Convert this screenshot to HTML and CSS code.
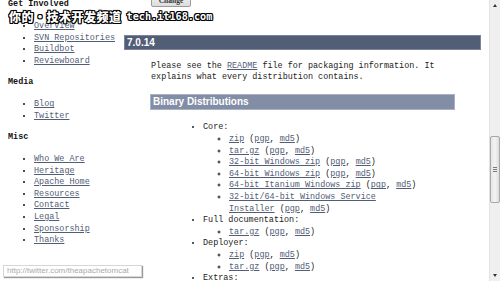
FILE: index.html
```html
<!DOCTYPE html>
<html>
<head>
<meta charset="utf-8">
<link rel="stylesheet" href="styles.css">
</head>
<body>
<div class="page">
  <nav class="side">
    <h2>Get Involved</h2>
    <ul>
      <li><a href="#">Overview</a></li>
      <li><a href="#">SVN Repositories</a></li>
      <li><a href="#">Buildbot</a></li>
      <li><a href="#">Reviewboard</a></li>
    </ul>
    <h2>Media</h2>
    <ul>
      <li><a href="#">Blog</a></li>
      <li><a href="#">Twitter</a></li>
    </ul>
    <h2>Misc</h2>
    <ul>
      <li><a href="#">Who We Are</a></li>
      <li><a href="#">Heritage</a></li>
      <li><a href="#">Apache Home</a></li>
      <li><a href="#">Resources</a></li>
      <li><a href="#">Contact</a></li>
      <li><a href="#">Legal</a></li>
      <li><a href="#">Sponsorship</a></li>
      <li><a href="#">Thanks</a></li>
    </ul>
  </nav>
  <main class="main">
    <div class="top"><button class="btn">Change</button></div>
    <h3 class="h3">7.0.14</h3>
    <div class="body">
      <p class="intro">Please see the <a href="#">README</a> file for packaging information. It explains what every distribution contains.</p>
      <h4 class="h4">Binary Distributions</h4>
      <ul class="dl">
        <li>Core:
          <ul>
            <li><a href="#">zip</a> (<a href="#">pgp</a>, <a href="#">md5</a>)</li>
            <li><a href="#">tar.gz</a> (<a href="#">pgp</a>, <a href="#">md5</a>)</li>
            <li><a href="#">32-bit Windows zip</a> (<a href="#">pgp</a>, <a href="#">md5</a>)</li>
            <li><a href="#">64-bit Windows zip</a> (<a href="#">pgp</a>, <a href="#">md5</a>)</li>
            <li><a href="#">64-bit Itanium Windows zip</a> (<a href="#">pgp</a>, <a href="#">md5</a>)</li>
            <li><a href="#">32-bit/64-bit Windows Service Installer</a> (<a href="#">pgp</a>, <a href="#">md5</a>)</li>
          </ul>
        </li>
        <li>Full documentation:
          <ul>
            <li><a href="#">tar.gz</a> (<a href="#">pgp</a>, <a href="#">md5</a>)</li>
          </ul>
        </li>
        <li>Deployer:
          <ul>
            <li><a href="#">zip</a> (<a href="#">pgp</a>, <a href="#">md5</a>)</li>
            <li><a href="#">tar.gz</a> (<a href="#">pgp</a>, <a href="#">md5</a>)</li>
          </ul>
        </li>
        <li>Extras:</li>
      </ul>
    </div>
  </main>
  <div class="scroll">
    <div class="arrow up"></div>
    <div class="thumb"><span></span><span></span><span></span></div>
    <div class="arrow down"></div>
  </div>
</div>
<div class="wm"><span class="wm-cn">你的·技术开发频道</span><span class="wm-en">tech.it168.com</span></div>
<div class="status">http://twitter.com/theapachetomcat</div>
</body>
</html>
```
FILE: styles.css
```css
html, body {
  margin: 0;
  padding: 0;
}
body {
  background: #fff;
  font-family: "Liberation Mono", "Courier New", monospace;
  font-size: 8.45px;
  line-height: 11.6px;
  color: #111;
  overflow: hidden;
  width: 500px;
  height: 281px;
  position: relative;
}
a {
  color: #525d76;
  text-decoration: underline;
}
.page {
  display: flex;
  height: 281px;
}
.side {
  width: 124px;
  flex: none;
  box-sizing: border-box;
  padding-left: 8px;
  margin-top: -0.8px;
}
.side h2 {
  margin: 0;
  font-size: inherit;
  font-weight: bold;
  line-height: 11.6px;
}
.side ul {
  margin: 10.5px 0 9.5px;
  padding-left: 26px;
  list-style: disc;
}
.main {
  width: 358px;
  flex: none;
}
.top {
  height: 7px;
  display: flex;
  align-items: flex-end;
  padding-left: 27px;
}
.btn {
  flex: none;
  height: 16px;
  width: 40px;
  padding: 0 0 1px;
  border: 1px solid #9a9a9a;
  border-radius: 2px;
  background: linear-gradient(#fafafa, #dcdcdc);
  font-family: "Liberation Serif", serif;
  font-weight: bold;
  font-size: 7.5px;
  color: #333;
  line-height: 9px;
  display: flex;
  align-items: flex-end;
  justify-content: center;
}
.h3 {
  margin: 28px 0 0;
  width: 357px;
  height: 15px;
  box-sizing: border-box;
  background: #525d76;
  border: 1px solid #7b849a;
  color: #fff;
  font-family: "Liberation Sans", Arial, sans-serif;
  font-weight: bold;
  font-size: 10px;
  line-height: 13px;
  padding-left: 2px;
}
.body {
  margin: 0 27px 0 26px;
}
.intro {
  margin: 10.5px 0 0;
  padding-left: 1px;
  color: #222;
}
.h4 {
  margin: 10.1px 0 0;
  height: 16px;
  box-sizing: border-box;
  background: #828da6;
  border: 1px solid #a9b1c3;
  color: #fff;
  font-family: "Liberation Sans", Arial, sans-serif;
  font-weight: bold;
  font-size: 10px;
  line-height: 14px;
  padding-left: 2px;
}
.dl {
  margin: 12.7px 34px 0 0;
  padding-left: 53px;
  list-style: disc;
  color: #222;
}
.dl ul {
  margin: 0;
  padding-left: 26px;
  list-style: circle;
}
.scroll {
  width: 11px;
  margin-left: auto;
  flex: none;
  background: #efefef;
  border-left: 1px solid #e2e2e2;
  box-sizing: border-box;
  display: flex;
  flex-direction: column;
  align-items: center;
}
.arrow {
  width: 0;
  height: 0;
  border-left: 2.5px solid transparent;
  border-right: 2.5px solid transparent;
  flex: none;
}
.arrow.up {
  margin-top: 4px;
  border-bottom: 3px solid #333;
}
.arrow.down {
  margin-top: auto;
  margin-bottom: 4px;
  border-top: 3px solid #333;
}
.thumb {
  margin-top: 129px;
  width: 10px;
  height: 67px;
  box-sizing: border-box;
  border: 1px solid #a8a8a8;
  border-radius: 2px;
  background: linear-gradient(90deg, #e6e6e6, #f3f3f3 50%, #dcdcdc);
  display: flex;
  flex-direction: column;
  align-items: center;
  justify-content: center;
  gap: 1px;
}
.thumb span {
  display: block;
  width: 4px;
  height: 1px;
  background: #7a7a7a;
}
.wm {
  position: absolute;
  left: 9px;
  top: 9px;
  display: flex;
  align-items: center;
  gap: 5px;
  color: #fff;
  white-space: nowrap;
}
.wm-cn {
  font-family: "Noto Sans CJK SC", sans-serif;
  font-weight: 900;
  font-size: 12px;
  line-height: 15px;
  letter-spacing: 0.5px;
  text-shadow: 1px 0 0 #000, -1px 0 0 #000, 0 1px 0 #000, 0 -1px 0 #000,
    1px 1px 0 #000, -1px -1px 0 #000, 1px -1px 0 #000, -1px 1px 0 #000;
}
.wm-en {
  font-family: "DejaVu Sans Mono", monospace;
  font-weight: bold;
  font-size: 10.2px;
  line-height: 15px;
  text-shadow: 1px 0 0 #000, -1px 0 0 #000, 0 1px 0 #000, 0 -1px 0 #000,
    1px 1px 0 #000, -1px -1px 0 #000, 1px -1px 0 #000, -1px 1px 0 #000;
}
.status {
  position: absolute;
  left: 3px;
  top: 265px;
  width: 139px;
  height: 12px;
  box-sizing: border-box;
  padding-left: 3px;
  background: #fff;
  border: 1px solid #d6d6d6;
  box-shadow: 1px 1px 1px #9a9a9a;
  font-family: "Liberation Sans", Arial, sans-serif;
  font-size: 8px;
  line-height: 10px;
  color: #aaa;
  white-space: nowrap;
}
```
